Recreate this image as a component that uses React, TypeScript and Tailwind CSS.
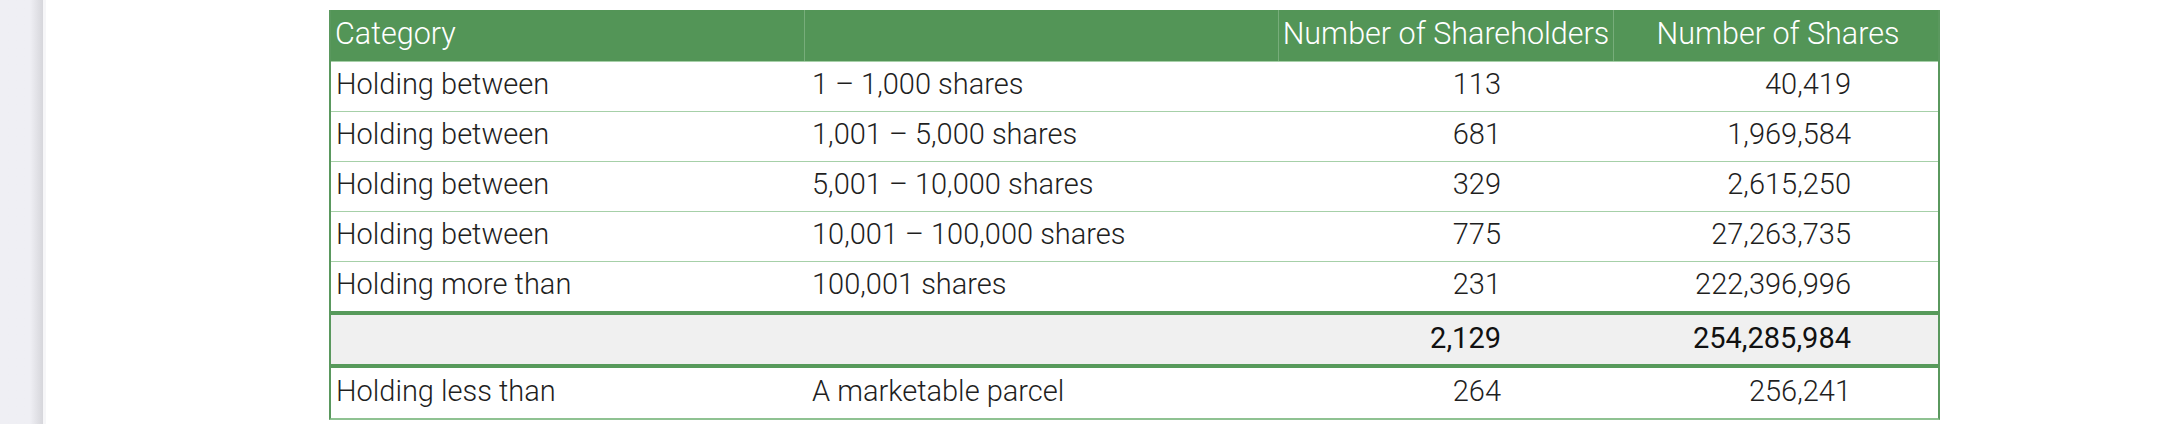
import React from "react";

type Row = {
  category: string;
  range: string;
  holders: string;
  shares: string;
};

const rows: Row[] = [
  { category: "Holding between", range: "1 – 1,000 shares", holders: "113", shares: "40,419" },
  { category: "Holding between", range: "1,001 – 5,000 shares", holders: "681", shares: "1,969,584" },
  { category: "Holding between", range: "5,001 – 10,000 shares", holders: "329", shares: "2,615,250" },
  { category: "Holding between", range: "10,001 – 100,000 shares", holders: "775", shares: "27,263,735" },
  { category: "Holding more than", range: "100,001 shares", holders: "231", shares: "222,396,996" },
];

const cols = "grid grid-cols-[474px_474px_335px_328px]";

function DataRow({ row, className = "" }: { row: Row; className?: string }) {
  return (
    <div className={`${cols} h-[50px] items-center pb-[3px] text-[29px] font-light text-[#1f1f1f] ${className}`}>
      <div className="pl-[5px]">{row.category}</div>
      <div className="pl-[7px]">{row.range}</div>
      <div className="text-right pr-[113px]">{row.holders}</div>
      <div className="text-right pr-[91px]">{row.shares}</div>
    </div>
  );
}

export default function App() {
  return (
    <div className="flex h-[424px] w-[2163px] bg-white font-['Roboto',sans-serif]">
      {/* side rail */}
      <div className="w-[43px] shrink-0 bg-gradient-to-r from-[#efeff4] from-70% to-[#d6d6db]" />
      <div className="w-[3px] shrink-0 bg-[#f6f6f8]" />

      <div className="pl-[283px] pt-[10px]">
        <div className="w-[1611px] border-x-2 border-[#5a985e] border-b-2 border-b-[#8fc292]">
          <div className={`${cols} h-[51px] bg-[#539557] text-[30.5px] font-light text-white`}>
            <div className="flex items-center pl-[4px] pb-[4px] border-r border-[#77ad7a]">Category</div>
            <div className="border-r border-[#77ad7a]" />
            <div className="flex items-center justify-center pb-[4px] border-r border-[#77ad7a]">
              Number of Shareholders
            </div>
            <div className="flex items-center justify-center pb-[4px]">Number of Shares</div>
          </div>

          {rows.map((row, i) => (
            <DataRow key={i} row={row} className="border-t border-[#a6d0a8]" />
          ))}

          <div className={`${cols} h-[57px] items-center pb-[2px] border-y-4 border-t-[#579a5b] border-b-[#579a5b] bg-[#f0f0f0] text-[29px] font-normal text-[#111]`}>
            <div />
            <div />
            <div className="text-right pr-[113px]">2,129</div>
            <div className="text-right pr-[91px]">254,285,984</div>
          </div>

          <DataRow
            row={{ category: "Holding less than", range: "A marketable parcel", holders: "264", shares: "256,241" }}
          />
        </div>
      </div>
    </div>
  );
}
